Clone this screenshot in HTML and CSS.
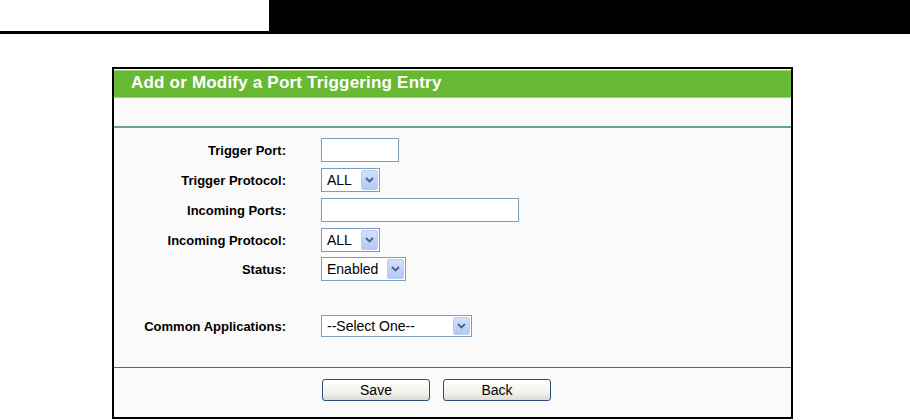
FILE: index.html
```html
<!DOCTYPE html>
<html>
<head>
<meta charset="utf-8">
<link rel="stylesheet" href="styles.css">
</head>
<body>
<div class="topbar">
  <div class="topblank"></div>
  <div class="topblock"></div>
</div>
<div class="topline"></div>

<div class="frame">
  <div class="title">Add or Modify a Port Triggering Entry</div>
  <div class="blank"></div>
  <div class="rule"></div>
  <div class="form">
    <div class="row">
      <div class="label">Trigger Port:</div>
      <div class="ctrl"><input class="field w78" type="text"></div>
    </div>
    <div class="row">
      <div class="label">Trigger Protocol:</div>
      <div class="ctrl">
        <div class="select w59"><span class="val">ALL</span><span class="arrow"><svg width="9" height="6" viewBox="0 0 9 6"><path d="M1 1 L4.5 4.5 L8 1" fill="none" stroke="#4d6185" stroke-width="1.8"/></svg></span></div>
      </div>
    </div>
    <div class="row">
      <div class="label">Incoming Ports:</div>
      <div class="ctrl"><input class="field w198" type="text"></div>
    </div>
    <div class="row">
      <div class="label">Incoming Protocol:</div>
      <div class="ctrl">
        <div class="select w59"><span class="val">ALL</span><span class="arrow"><svg width="9" height="6" viewBox="0 0 9 6"><path d="M1 1 L4.5 4.5 L8 1" fill="none" stroke="#4d6185" stroke-width="1.8"/></svg></span></div>
      </div>
    </div>
    <div class="row row-status">
      <div class="label">Status:</div>
      <div class="ctrl">
        <div class="select w85"><span class="val">Enabled</span><span class="arrow"><svg width="9" height="6" viewBox="0 0 9 6"><path d="M1 1 L4.5 4.5 L8 1" fill="none" stroke="#4d6185" stroke-width="1.8"/></svg></span></div>
      </div>
    </div>
    <div class="row row-app">
      <div class="label">Common Applications:</div>
      <div class="ctrl">
        <div class="select w151 h22"><span class="val">--Select One--</span><span class="arrow"><svg width="9" height="6" viewBox="0 0 9 6"><path d="M1 1 L4.5 4.5 L8 1" fill="none" stroke="#4d6185" stroke-width="1.8"/></svg></span></div>
      </div>
    </div>
  </div>
  <div class="rule2"></div>
  <div class="buttons">
    <button class="btn" type="button">Save</button>
    <button class="btn" type="button">Back</button>
  </div>
</div>
</body>
</html>
```
FILE: styles.css
```css
html, body {
  margin: 0;
  padding: 0;
  background: #fff;
  font-family: "Liberation Sans", Arial, sans-serif;
}
.topbar {
  display: flex;
  height: 31px;
}
.topblank {
  width: 269px;
}
.topblock {
  flex: 1;
  background: #000;
}
.topline {
  height: 3px;
  background: #000;
}
.frame {
  margin: 33px 0 0 112px;
  width: 677px;
  height: 348px;
  border: 2px solid #000;
  background: #fafafa;
}
.title {
  margin-top: 1px;
  height: 26px;
  border-top: 1px solid #a3d47c;
  border-bottom: 1px solid #a3d47c;
  background: #67b934;
  color: #fff;
  font-weight: bold;
  font-size: 17px;
  letter-spacing: 0.2px;
  line-height: 24px;
  padding-left: 17px;
  box-sizing: content-box;
}
.blank {
  height: 28px;
}
.rule {
  height: 2px;
  background: #6aa385;
}
.form {
  padding-top: 7px;
}
.row {
  display: grid;
  grid-template-columns: 172px 1fr;
  column-gap: 35px;
  align-items: center;
  height: 30px;
}
.row-status {
  height: 28px;
}
.row-app {
  margin-top: 28px;
}
.label {
  text-align: right;
  font-weight: bold;
  font-size: 13px;
  color: #000;
}
.ctrl {
  display: flex;
  align-items: center;
}
.field {
  box-sizing: border-box;
  height: 24px;
  border: 1px solid #7f9db9;
  background: #fff;
  margin: 0;
  padding: 0 3px;
  font-family: "Liberation Sans", Arial, sans-serif;
  font-size: 14px;
}
.w78 { width: 78px; }
.w198 { width: 198px; }
.select {
  box-sizing: border-box;
  height: 24px;
  border: 1px solid #7f9db9;
  background: #fff;
  display: flex;
  align-items: center;
  justify-content: space-between;
  padding: 1px;
  font-size: 14px;
  color: #000;
}
.h22 { height: 22px; }
.w59 { width: 59px; }
.w85 { width: 85px; }
.w151 { width: 151px; }
.val {
  padding-left: 4px;
  white-space: nowrap;
}
.arrow {
  box-sizing: border-box;
  width: 17px;
  height: 100%;
  border: 1px solid #bccdf5;
  border-radius: 2px;
  background: linear-gradient(#d2e0fd, #b4c8f6);
  display: flex;
  align-items: center;
  justify-content: center;
}
.rule2 {
  margin-top: 26px;
  height: 1px;
  background: #3a7f4c;
}
.buttons {
  display: flex;
  gap: 13px;
  padding: 11px 0 0 208px;
}
.btn {
  width: 108px;
  height: 22px;
  margin: 0;
  padding: 0;
  border: 1px solid #2a4f7e;
  border-radius: 3px;
  background: linear-gradient(#ffffff, #f0efe8 70%, #dcdad0);
  font-family: "Liberation Sans", Arial, sans-serif;
  font-size: 14px;
  color: #000;
}
```
